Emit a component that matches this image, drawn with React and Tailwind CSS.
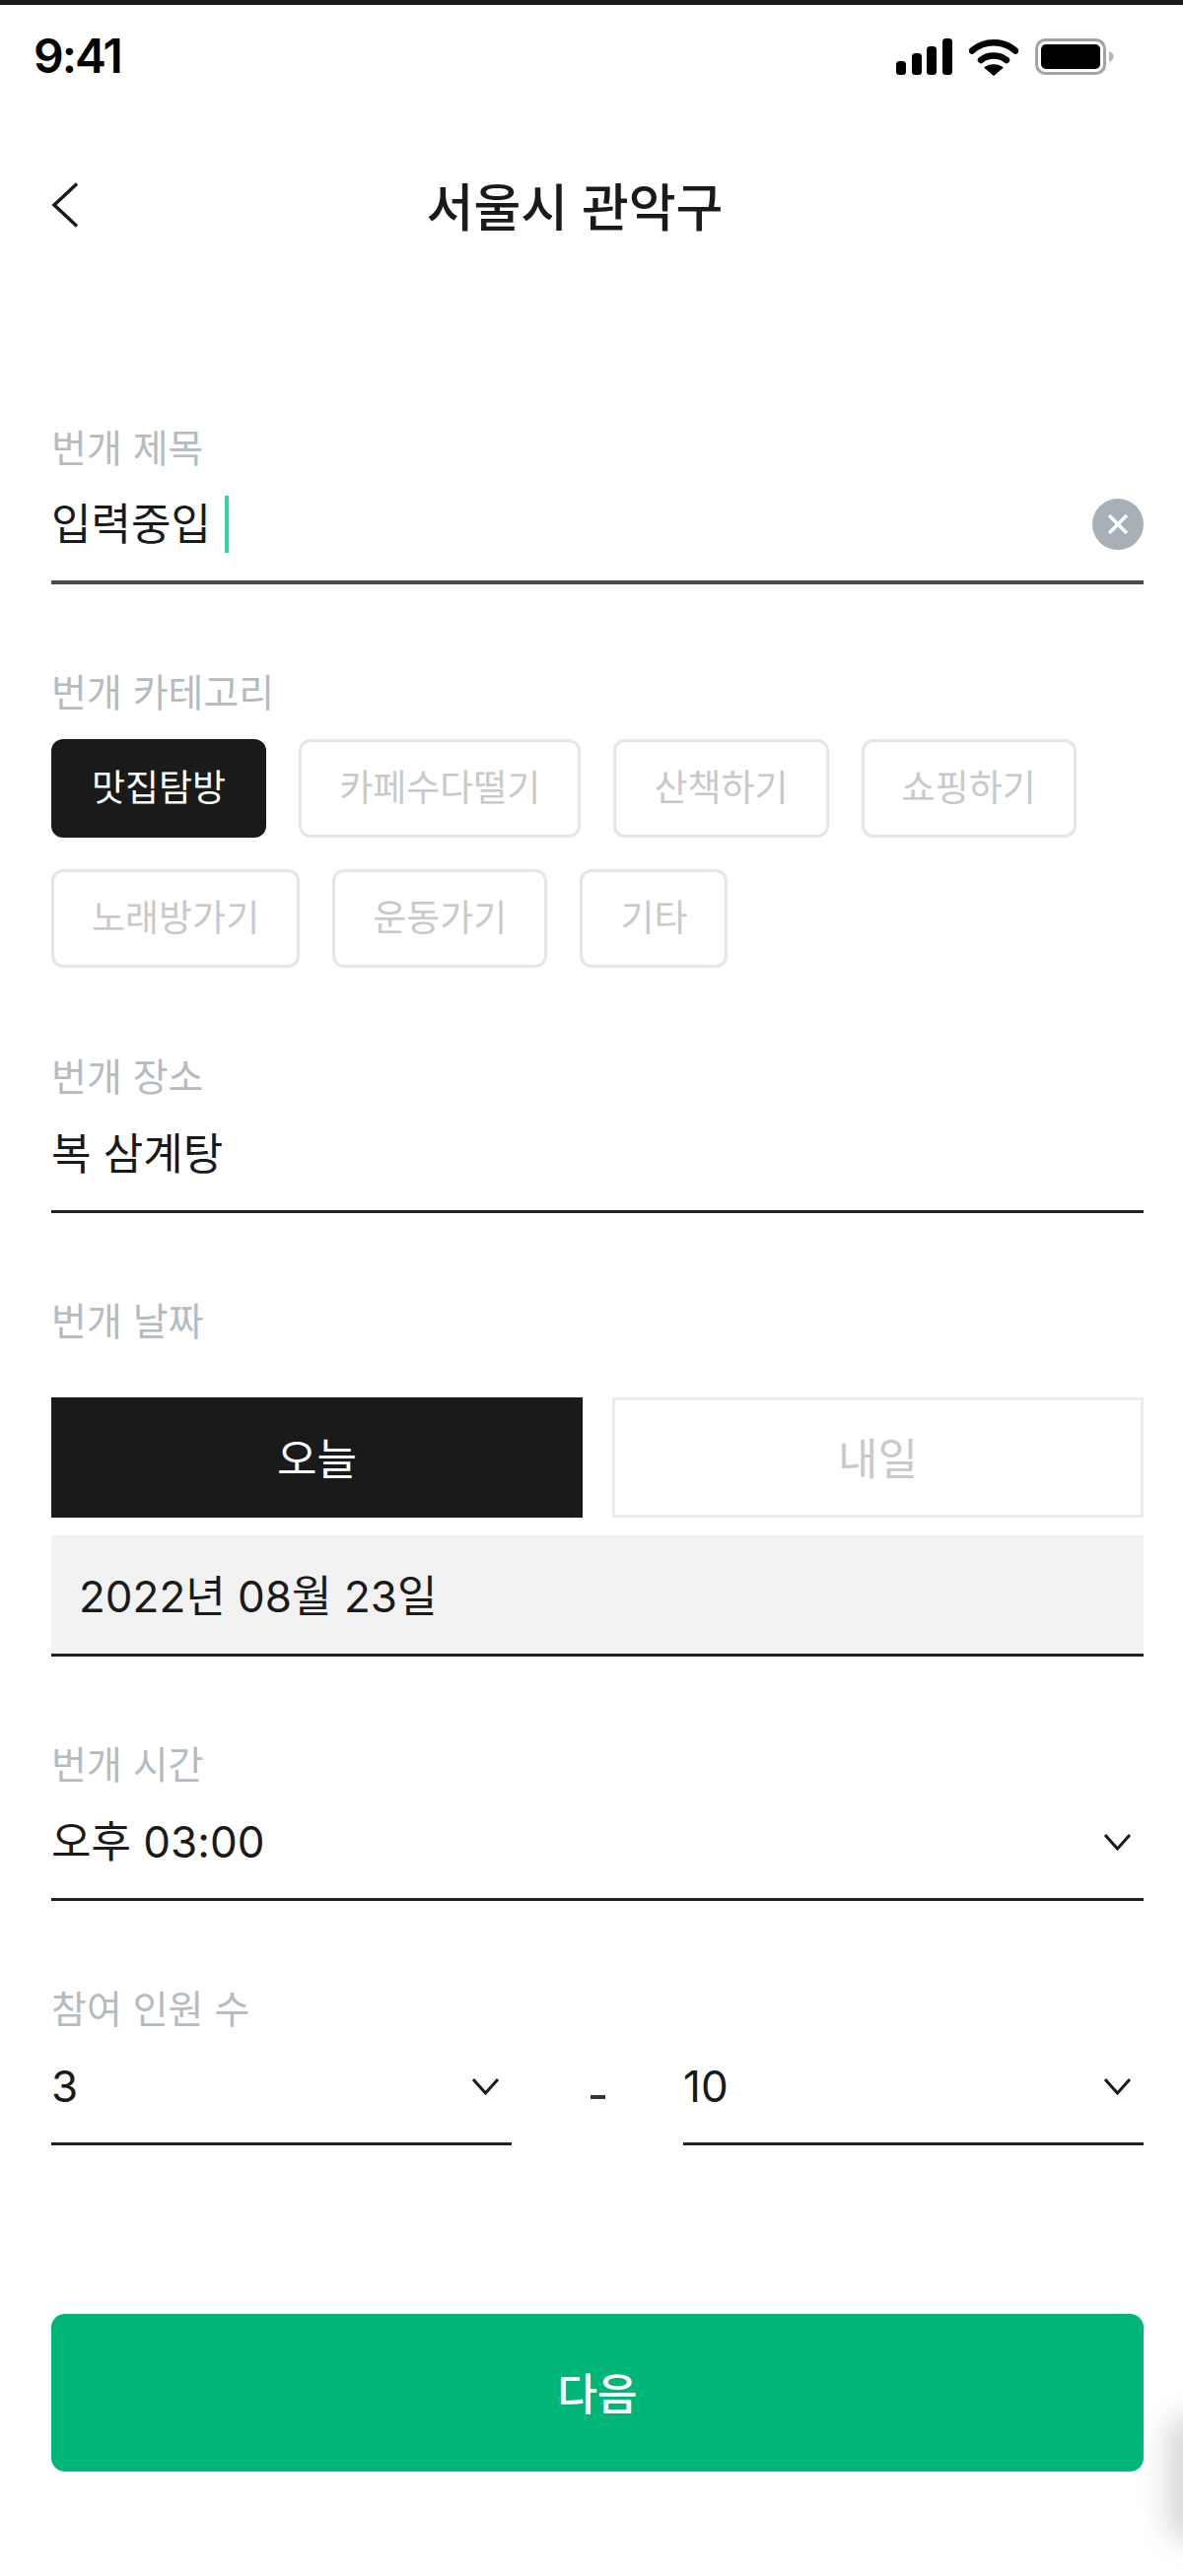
function Signal() {
  return (
    <svg width="57" height="37" viewBox="0 0 57 37" fill="#000">
      <rect x="0" y="23" width="10" height="14" rx="3.5" />
      <rect x="16" y="15" width="10" height="22" rx="3.5" />
      <rect x="31" y="8" width="10" height="29" rx="3.5" />
      <rect x="47" y="0" width="10" height="37" rx="3.5" />
    </svg>
  );
}

function Wifi() {
  return (
    <svg width="50" height="39" viewBox="0 0 50 39" fill="none">
      <path d="M3 13.5C15.5 2.5 34.5 2.5 47 13.5" stroke="#000" strokeWidth="6.5" strokeLinecap="round" />
      <path d="M12 23C19 17 31 17 38 23" stroke="#000" strokeWidth="6.5" strokeLinecap="round" />
      <path d="M25 39L15 30.5C20.5 26 29.5 26 35 30.5Z" fill="#000" />
    </svg>
  );
}

function Battery() {
  return (
    <svg width="80" height="37" viewBox="0 0 80 37" fill="none">
      <rect x="1.5" y="1.5" width="69" height="34" rx="9" stroke="#a3a3a3" strokeWidth="3" />
      <rect x="6" y="6" width="60" height="25" rx="5" fill="#000" />
      <path d="M75 13C78 14 79.5 16 79.5 18.5C79.5 21 78 23 75 24Z" fill="#b5b5b5" />
    </svg>
  );
}

function Chevron() {
  return (
    <svg width="29" height="18" viewBox="0 0 29 18" fill="none">
      <path d="M2 2L14.5 16L27 2" stroke="#1a1a1a" strokeWidth="3" />
    </svg>
  );
}

function Label({ children }) {
  return <div className="h-10 text-[39px] leading-10 text-[#b4bcc2]">{children}</div>;
}

function Field({ label, children, className = "", line = "border-b-[3px] border-[#222]" }) {
  return (
    <div className={className}>
      <Label>{label}</Label>
      <div className={`flex h-[118px] items-center justify-between text-[44px] text-[#1a1a1a] ${line}`}>
        {children}
      </div>
    </div>
  );
}

function Chip({ children, active }) {
  return (
    <div
      className={
        active
          ? "flex h-[100px] items-center rounded-xl bg-[#1a1a1a] px-[41px] text-[37px] text-white"
          : "flex h-[100px] items-center rounded-xl border-[3px] border-[#e6e6e6] px-[38px] text-[37px] text-[#c9c9c9]"
      }
    >
      {children}
    </div>
  );
}

export default function App() {
  return (
    <div className="relative h-[2614px] w-[1200px] overflow-hidden bg-white font-['Inter','Noto_Sans_CJK_KR',sans-serif]">
      <div className="h-[5px] bg-[#1a1a1a]" />

      <div className="flex h-[104px] items-center justify-between pl-[34px] pr-[70px]">
        <span className="text-[48px] font-semibold tracking-[-2px] text-black">9:41</span>
        <div className="flex items-center gap-[17px]">
          <Signal />
          <Wifi />
          <Battery />
        </div>
      </div>

      <div className="relative flex h-[206px] items-center justify-center pr-[34px]">
        <svg className="absolute left-[52px] top-[76px]" width="28" height="46" viewBox="0 0 28 46" fill="none">
          <path d="M26 1.5L3 23L26 44.5" stroke="#1a1a1a" strokeWidth="3.5" />
        </svg>
        <h1 className="text-[52px] font-medium text-[#1a1a1a]">서울시 관악구</h1>
      </div>

      <div className="pl-[52px] pr-[40px] pt-[120px]">
        <Field label="번개 제목" line="border-b-4 border-[#4a4a4a]">
          <div className="flex items-center">
            <span>입력중입</span>
            <span className="ml-[14px] h-[58px] w-1 bg-[#2fd69a]" />
          </div>
          <span className="flex h-[52px] w-[52px] items-center justify-center rounded-full bg-[#a6b0b6]">
            <svg width="22" height="22" viewBox="0 0 22 22" fill="none">
              <path d="M2 2L20 20M20 2L2 20" stroke="#fff" strokeWidth="3.5" />
            </svg>
          </span>
        </Field>

        <div className="mt-[90px]">
          <Label>번개 카테고리</Label>
          <div className="mt-[27px] flex flex-wrap gap-x-[33px] gap-y-[32px]">
            <Chip active>맛집탐방</Chip>
            <Chip>카페수다떨기</Chip>
            <Chip>산책하기</Chip>
            <Chip>쇼핑하기</Chip>
            <Chip>노래방가기</Chip>
            <Chip>운동가기</Chip>
            <Chip>기타</Chip>
          </div>
        </div>

        <Field label="번개 장소" className="mt-[91px]">
          <span>복 삼계탕</span>
        </Field>

        <div className="mt-[90px]">
          <Label>번개 날짜</Label>
          <div className="mt-[57px] grid grid-cols-2 gap-[30px]">
            <div className="flex h-[122px] items-center justify-center bg-[#1a1a1a] pt-[3px] text-[44px] text-white">오늘</div>
            <div className="flex h-[122px] items-center justify-center border-[3px] border-[#ececec] pt-[3px] text-[44px] text-[#c9c9c9]">내일</div>
          </div>
          <div className="mt-[18px] flex h-[123px] items-center border-b-[3px] border-[#222] bg-[#f2f2f2] pl-[28px] pt-[3px] text-[44px] text-[#1a1a1a]">
            2022년 08월 23일
          </div>
        </div>

        <Field label="번개 시간" className="mt-[90px]">
          <span>오후 03:00</span>
          <span className="mr-[12px]"><Chevron /></span>
        </Field>

        <div className="mt-[90px]">
          <Label>참여 인원 수</Label>
          <div className="flex items-start justify-between">
            <div className="flex h-[118px] w-[467px] items-center justify-between border-b-[3px] border-[#222] text-[44px] text-[#1a1a1a]">
              <span>3</span>
              <span className="mr-[12px]"><Chevron /></span>
            </div>
            <span className="mt-[67px] h-1 w-[15px] bg-[#333]" />
            <div className="flex h-[118px] w-[467px] items-center justify-between border-b-[3px] border-[#222] text-[44px] text-[#1a1a1a]">
              <span>10</span>
              <span className="mr-[12px]"><Chevron /></span>
            </div>
          </div>
        </div>

        <button className="mt-[171px] flex h-40 w-full items-center justify-center rounded-[14px] bg-[#00b578] pt-[3px] text-[44px] font-medium text-white">
          다음
        </button>
      </div>

      <div className="absolute right-[-34px] top-[2450px] h-[130px] w-[50px] rounded-full bg-[#d8d8d8] blur-[14px]" />
    </div>
  );
}
